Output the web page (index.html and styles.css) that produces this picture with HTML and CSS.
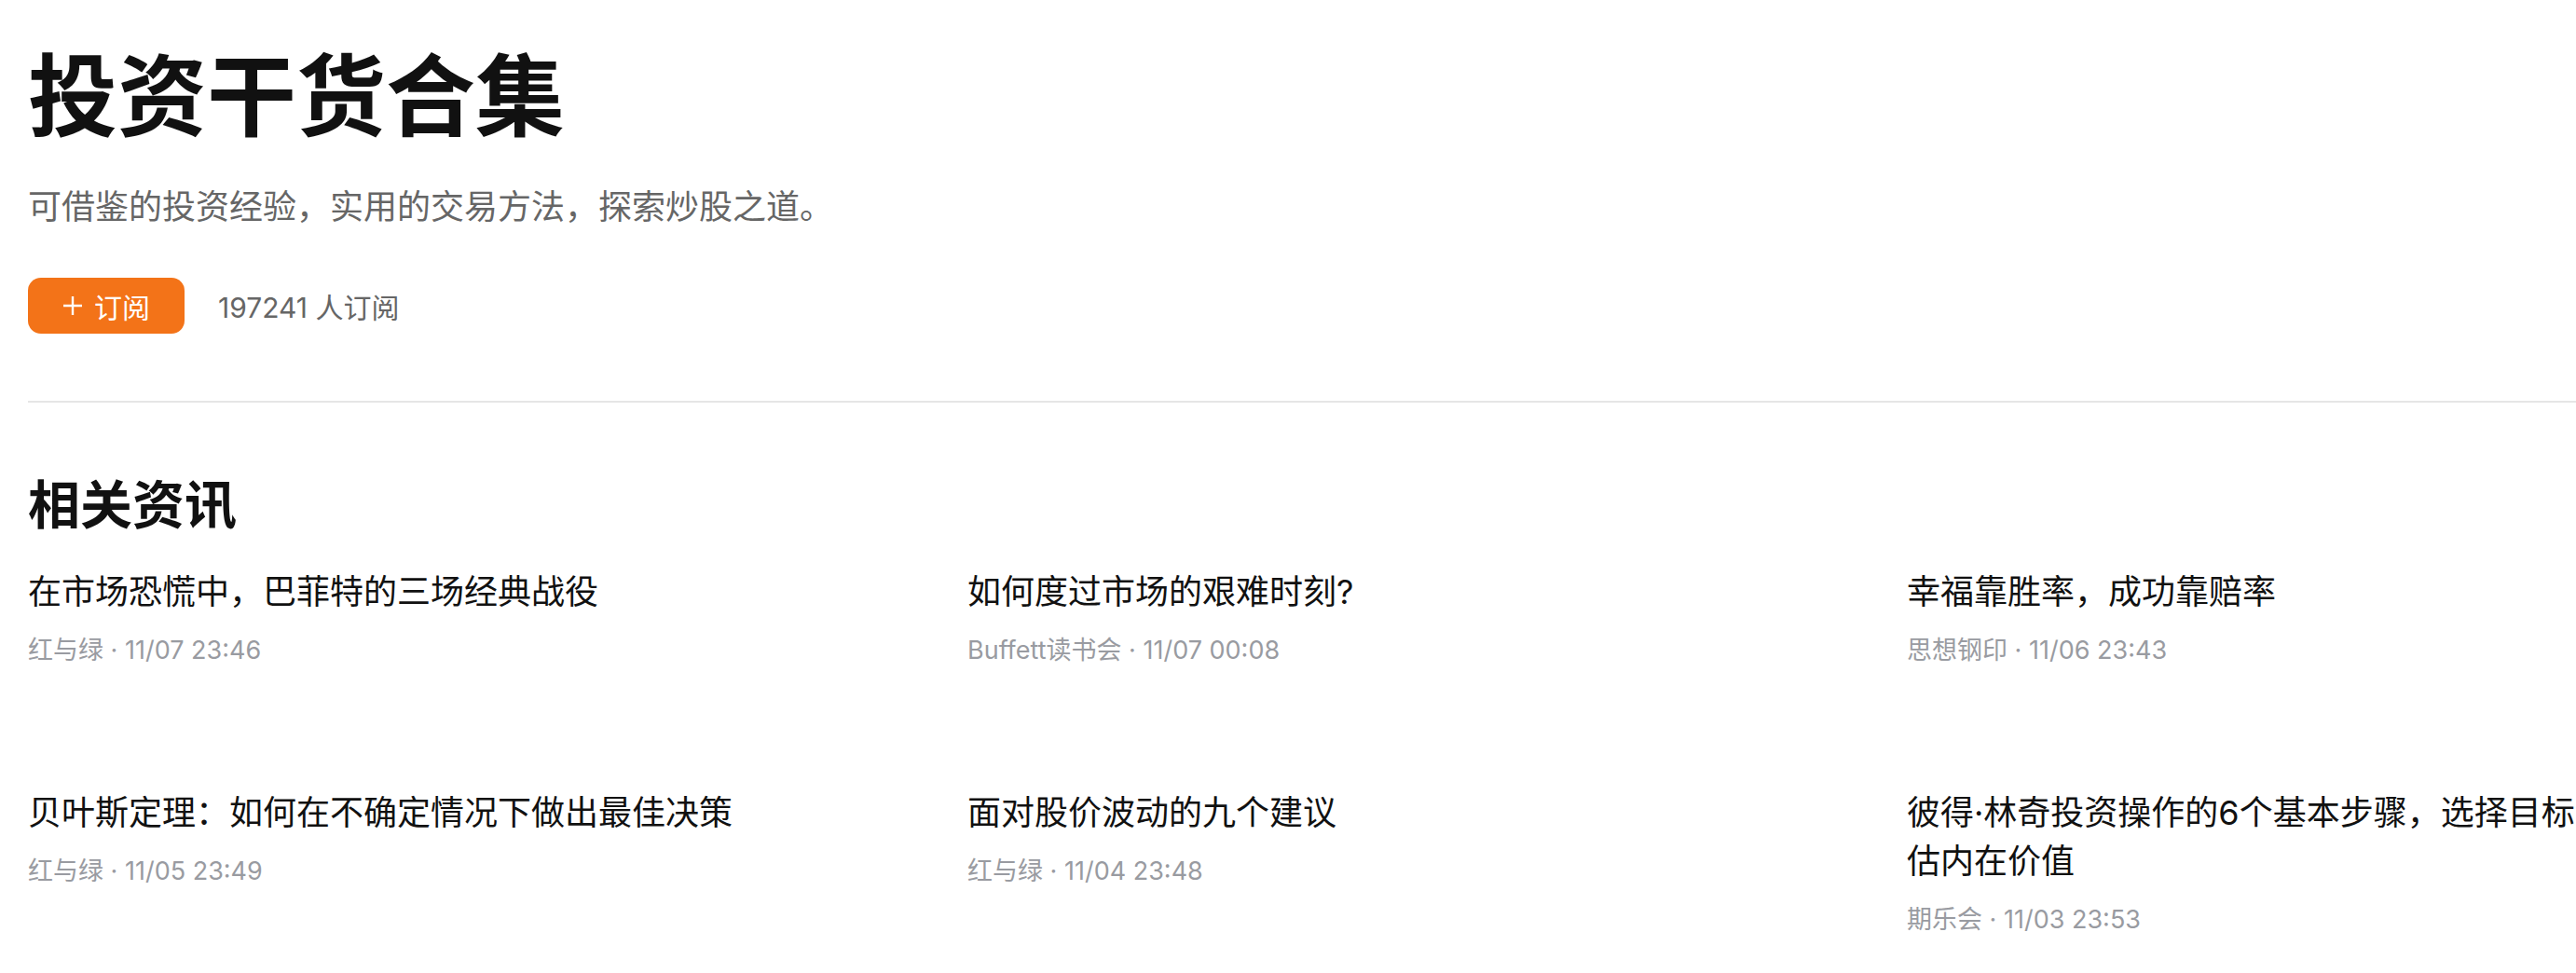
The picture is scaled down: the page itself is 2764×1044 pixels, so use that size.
FILE: index.html
```html
<!DOCTYPE html>
<html lang="zh-CN">
<head>
  <meta charset="UTF-8">
  <meta name="viewport" content="width=device-width, initial-scale=1.0">
  <title>投资干货合集</title>
  <link rel="stylesheet" href="styles.css">
</head>
<body>

  <main class="page">
    <header class="topic">
      <h1 class="topic-title">投资干货合集</h1>
      <p class="topic-desc">可借鉴的投资经验，实用的交易方法，探索炒股之道。</p>
      <div class="topic-actions">
        <button class="subscribe-btn">
          <svg class="plus-icon" viewBox="0 0 22 22" width="22" height="22">
            <path d="M11 1v20M1 11h20" stroke="#fff" stroke-width="2.4" fill="none"/>
          </svg>
          <span>订阅</span>
        </button>
        <span class="subscriber-count">197241 人订阅</span>
      </div>
    </header>

    <div class="divider"></div>

    <section class="news">
      <h2 class="news-heading">相关资讯</h2>
      <div class="news-grid">
        <div class="news-item">
          <div class="news-title">在市场恐慌中，巴菲特的三场经典战役</div>
          <div class="news-meta">红与绿 · 11/07 23:46</div>
        </div>
        <div class="news-item">
          <div class="news-title">如何度过市场的艰难时刻?</div>
          <div class="news-meta">Buffett读书会 · 11/07 00:08</div>
        </div>
        <div class="news-item">
          <div class="news-title">幸福靠胜率，成功靠赔率</div>
          <div class="news-meta">思想钢印 · 11/06 23:43</div>
        </div>
        <div class="news-item">
          <div class="news-title">贝叶斯定理：如何在不确定情况下做出最佳决策</div>
          <div class="news-meta">红与绿 · 11/05 23:49</div>
        </div>
        <div class="news-item">
          <div class="news-title">面对股价波动的九个建议</div>
          <div class="news-meta">红与绿 · 11/04 23:48</div>
        </div>
        <div class="news-item">
          <div class="news-title">彼得·林奇投资操作的6个基本步骤，选择目标公司并合理评估内在价值</div>
          <div class="news-meta">期乐会 · 11/03 23:53</div>
        </div>
      </div>
    </section>
  </main>

</body>
</html>
```

FILE: styles.css
```css
html, body {
  overflow: hidden;
}

body {
  margin: 0;
  padding: 0;
  background-color: #fff;
  color: #111;
  font-family: Inter, "Noto Sans CJK SC", sans-serif;
}

.page {
  padding: 36px 0 0 30px;
}

/* Topic header */
.topic-title {
  margin: 0;
  font-size: 96px;
  line-height: 134px;
  font-weight: 700;
  color: #111;
}

.topic-desc {
  margin: 25px 0 0;
  font-size: 36px;
  line-height: 54px;
  color: #666;
}

.topic-actions {
  display: flex;
  align-items: center;
  margin-top: 49px;
}

.subscribe-btn {
  display: flex;
  align-items: center;
  justify-content: center;
  gap: 12px;
  width: 168px;
  height: 60px;
  padding: 0;
  border: none;
  border-radius: 14px;
  background-color: #f37318;
  color: #fff;
  font-family: inherit;
  font-size: 30px;
  cursor: pointer;
}

.plus-icon {
  display: block;
}

.subscriber-count {
  margin-left: 36px;
  font-size: 30px;
  color: #666;
}

.divider {
  margin-top: 72px;
  border-top: 2px solid #e6e6e6;
}

/* Related news */
.news-heading {
  margin: 70px 0 0;
  font-size: 56px;
  line-height: 80px;
  font-weight: 700;
  color: #111;
}

.news-grid {
  display: grid;
  grid-template-columns: repeat(3, 960px);
  column-gap: 48px;
  row-gap: 128px;
  margin-top: 27px;
}

.news-title {
  font-size: 36px;
  line-height: 52px;
  color: #111;
}

.news-meta {
  margin-top: 17px;
  font-size: 27px;
  line-height: 40px;
  color: #999ba1;
}
```
